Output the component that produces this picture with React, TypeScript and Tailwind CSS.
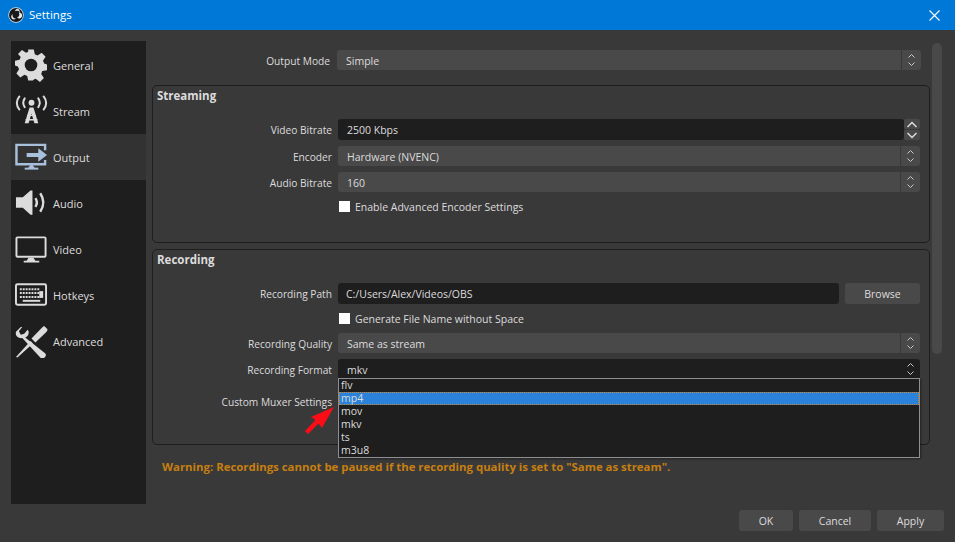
import React from 'react';

const GearIcon = () => (
  <svg width="33" height="33" viewBox="0 0 34 34" fill="#dcdcdc">
    <path fillRule="evenodd" d="M14 1h6l1 5 3 1.300 4.300-2.800 4.200 4.200L29.700 13l1.300 3 3 1v6l-5 1-1.200 3 2.900 4.300-4.200 4.200L22 32l-2 .8L19 34h-5l-1-4.800-3-1.300-4.300 2.900-4.200-4.200L4.300 22 3 19l-3-1v-5l4.800-1 1.300-3L3.200 5.700 7.400 1.500 11.700 4.400 14 3.500z" transform="translate(0 -.5) scale(.97)" />
    <circle cx="16.500" cy="16.500" r="6.500" fill="#1f1e1f" />
  </svg>
);

const StreamIcon = () => (
  <svg width="33" height="33" viewBox="0 0 34 34" fill="none" stroke="#dcdcdc" strokeLinecap="round">
    <circle cx="17" cy="8" r="3" fill="#dcdcdc" stroke="none" />
    <path d="M10 3.500c-2 3-2 6 0 9M24 3.500c2 3 2 6 0 9" strokeWidth="2" />
    <path d="M4.500 1.500c-3.500 4.500-3.500 9 0 13.500M29.500 1.500c3.500 4.500 3.500 9 0 13.500" strokeWidth="2" />
    <path d="M15 13h4l5 16h-4l-3-10-3 10h-4z" fill="#dcdcdc" stroke="none" />
    <path d="M13 21h8M11.500 25.500h11" stroke="#dcdcdc" strokeWidth="1.500" />
  </svg>
);

const OutputIcon = () => (
  <svg width="33" height="28" viewBox="0 0 34 28" fill="none">
    <path d="M31 7V1.500H1.500V21.500H31V17" stroke="#a8c0dc" strokeWidth="2.500" />
    <path d="M13 26l3-4h2l3 4z" fill="#a8c0dc" />
    <rect x="10" y="25" width="14" height="2" fill="#a8c0dc" />
    <path d="M12 10h12V5l9 7-9 7v-5H12z" fill="#a8c0dc" />
  </svg>
);

const AudioIcon = () => (
  <svg width="33" height="26" viewBox="0 0 34 26" fill="none">
    <path d="M1 7h7l8-7h2v25h-2L8 18H1z" fill="#dcdcdc" />
    <path d="M21 8c2 3 2 6 0 9" stroke="#dcdcdc" strokeWidth="2.500" />
    <path d="M26 3c4 6 4 13 0 19" stroke="#dcdcdc" strokeWidth="2.500" />
  </svg>
);

const VideoIcon = () => (
  <svg width="33" height="27" viewBox="0 0 34 27" fill="none">
    <rect x="1" y="1" width="30" height="20" rx="1" stroke="#dcdcdc" strokeWidth="2" transform="translate(.5 0)" />
    <path d="M14 22h5l2 3h4v2H9v-2h3z" fill="#dcdcdc" />
  </svg>
);

const KeyboardIcon = () => (
  <svg width="33" height="24" viewBox="0 0 34 24" fill="none">
    <rect x="1" y="1" width="31" height="21" rx="1.500" stroke="#dcdcdc" strokeWidth="2" />
    <path d="M5 6h20M5 10h20M5 14h20" stroke="#dcdcdc" strokeWidth="2" strokeDasharray="2 1" />
    <path d="M8 18h18" stroke="#dcdcdc" strokeWidth="2" />
    <rect x="25" y="8" width="4" height="7" fill="#dcdcdc" />
  </svg>
);

const ToolsIcon = () => (
  <svg width="33" height="33" viewBox="0 0 34 34" fill="#dcdcdc">
    <path d="M30 1l3.500 3.500c0 1.500-1 2.500-2 3.500L21 18l-4-4L27 3.500c1-1 2-2 3-2.500z" />
    <path d="M16 16.500l2.500 2.500L2.500 33.500 1 33z" />
    <path d="M1 7l5-5 1.500 0-3.500 4.500 2 3.500 3.500-1 3.500-4 1 1.500c.5 3-1 5.500-3.500 6.500L31 29c1.500 1.500 1 3-.5 4.500s-3 1.500-4.500 0L7.500 13.500C3 14 0 11 1 7z" />
  </svg>
);

const ObsLogo = () => (
  <svg width="16" height="16" viewBox="0 0 16 16">
    <circle cx="8" cy="8" r="7.700" fill="#e8e8e8" />
    <circle cx="8" cy="8" r="7" fill="#17181a" />
    <path d="M9 1.800a3 3 0 0 1 2.800 3.700A3.200 3.200 0 0 0 7 4.300a3 3 0 0 1 2-2.500zM13.800 10a3 3 0 0 1-4.700.6 3.200 3.200 0 0 0 1.600-5 3 3 0 0 1 3.100 4.400zM4 11.800a3 3 0 0 1 .7-4.700 3.200 3.200 0 0 0 3.300 4.400 3 3 0 0 1-4 .3z" fill="#e8e8e8" />
  </svg>
);

const SpinIcon = () => (
  <svg width="9" height="14" viewBox="0 0 9 14" fill="none" stroke="#c8c8c8" strokeWidth="1">
    <path d="M1.500 4.500L4.500 1.500l3 3M1.500 9.500l3 3 3-3" />
  </svg>
);

const navItems = [
  { label: 'General', icon: <GearIcon /> },
  { label: 'Stream', icon: <StreamIcon /> },
  { label: 'Output', icon: <OutputIcon />, active: true },
  { label: 'Audio', icon: <AudioIcon /> },
  { label: 'Video', icon: <VideoIcon /> },
  { label: 'Hotkeys', icon: <KeyboardIcon /> },
  { label: 'Advanced', icon: <ToolsIcon /> },
];

const formats = ['flv', 'mp4', 'mov', 'mkv', 'ts', 'm3u8'];

function Combo({ value, dark }: { value: string; dark?: boolean }) {
  return (
    <div className={`flex h-5 flex-1 items-center rounded-[3px] ${dark ? 'bg-[#1f1e1f]' : 'bg-[#4a494a]'}`}>
      <span className="mt-[2px] flex-1 pl-[9px]">{value}</span>
      <span className={`flex h-full w-5 items-center justify-center border-l ${dark ? 'border-transparent' : 'border-[#3a393a]'}`}>
        <SpinIcon />
      </span>
    </div>
  );
}

function Field({ label, children, className = '' }: { label?: string; children: React.ReactNode; className?: string }) {
  return (
    <div className={`flex items-center pr-[9px] ${className}`}>
      <span className="mt-[2px] w-[179px] text-right text-[10.200px]">{label}</span>
      <div className="ml-[6px] flex flex-1 items-center">{children}</div>
    </div>
  );
}

function CheckRow({ label, className = '' }: { label: string; className?: string }) {
  return (
    <Field className={`h-[15px] ${className}`}>
      <span className="ml-px h-[11px] w-[11px] bg-white" />
      <span className="ml-[5px] mt-[2px]">{label}</span>
    </Field>
  );
}

function GroupBox({ title, className = '', children }: { title: string; className?: string; children: React.ReactNode }) {
  return (
    <section className={`rounded-[5px] border border-[#1f1e1f] ${className}`}>
      <h2 className="pl-1 pt-[2px] text-[11.500px] font-bold leading-[15px]">{title}</h2>
      {children}
    </section>
  );
}

export default function App() {
  return (
    <div className="flex h-[542px] w-[955px] flex-col overflow-hidden bg-[#3a393a] font-['Open_Sans',sans-serif] text-[10.500px] leading-[15px] text-[#dcdcdc]">
      <header className="flex h-[30px] shrink-0 items-center bg-[#0078d7] pl-2 pr-[15px] text-white">
        <ObsLogo />
        <span className="mb-[2px] ml-[5px] flex-1 text-[11.500px]">Settings</span>
        <svg width="11" height="11" viewBox="0 0 11 11" stroke="#fff" strokeWidth="1.100">
          <path d="M.5.500l10 10M10.500.500l-10 10" />
        </svg>
      </header>

      <div className="flex flex-1 flex-col px-[11px] pt-[11px]">
        <div className="flex h-[463px]">
          <nav className="flex w-[135px] flex-col bg-[#1f1e1f] pt-px">
            {navItems.map((item) => (
              <div
                key={item.label}
                className={`flex h-[46px] items-center pl-1 ${item.active ? 'bg-[#333233]' : ''}`}
              >
                <span className="flex w-[38px] items-center justify-start">{item.icon}</span>
                <span className="text-[11px]">{item.label}</span>
              </div>
            ))}
          </nav>

          <main className="ml-[6px] flex w-[778px] flex-col pt-[9px]">
            <div className="flex items-center pr-[9px]">
              <span className="mt-[2px] w-[178px] text-right text-[10.200px]">Output Mode</span>
              <div className="ml-[7px] flex flex-1">
                <Combo value="Simple" />
              </div>
            </div>

            <GroupBox title="Streaming" className="mt-[15px] h-[158px]">
              <Field label="Video Bitrate" className="mt-4">
                <div className="flex h-[21px] flex-1 items-center rounded-[3px] bg-[#1f1e1f] pl-[9px] pt-[2px]">2500 Kbps</div>
                <div className="flex h-[21px] w-4 flex-col gap-px">
                  {[0, 1].map((i) => (
                    <span key={i} className="flex flex-1 items-center justify-center rounded-[2px] bg-[#4a494a]">
                      <svg width="12" height="7" viewBox="0 0 12 7" fill="none" stroke="#dcdcdc" strokeWidth="1.500">
                        <path d={i === 0 ? 'M1.500 6L6 1.500 10.500 6' : 'M1.500 1L6 5.500 10.500 1'} />
                      </svg>
                    </span>
                  ))}
                </div>
              </Field>
              <Field label="Encoder" className="mt-[6px]">
                <Combo value="Hardware (NVENC)" />
              </Field>
              <Field label="Audio Bitrate" className="mt-[6px]">
                <Combo value="160" />
              </Field>
              <CheckRow label="Enable Advanced Encoder Settings" className="mt-[7px]" />
            </GroupBox>

            <GroupBox title="Recording" className="mt-[6px] h-[196px]">
              <Field label="Recording Path" className="mt-4">
                <div className="flex h-[21px] flex-1 items-center rounded-[3px] bg-[#1f1e1f] pl-2 pt-[2px]">C:/Users/Alex/Videos/OBS</div>
                <button className="ml-[6px] h-[21px] w-[75px] rounded-[3px] bg-[#4a494a] pt-[2px]">Browse</button>
              </Field>
              <CheckRow label="Generate File Name without Space" className="mt-[7px]" />
              <Field label="Recording Quality" className="mt-[7px]">
                <Combo value="Same as stream" />
              </Field>
              <Field label="Recording Format" className="relative mt-[6px]">
                <Combo value="mkv" dark />
                <ul className="absolute left-[185px] top-[19px] z-10 h-[80px] w-[582px] border border-[#8e8f90] bg-[#1f1e1f] leading-[13px] shadow-[1px_1px_2px_#0006]">
                  {formats.map((format) => (
                    <li
                      key={format}
                      className={`h-[13px] pl-[2px] ${format === 'mp4' ? 'border border-dotted border-[#d9821a] bg-[#2a82da] pl-px leading-[11px]' : ''}`}
                    >
                      {format}
                    </li>
                  ))}
                </ul>
                <svg className="absolute left-[152px] top-[48px] z-20" width="30" height="28" viewBox="0 0 30 28">
                  <path d="M29 0L17 21l-3.500-4.500L3 27 0 24 10.500 13 6 10z" fill="#fa0d17" />
                </svg>
              </Field>
              <Field label="Custom Muxer Settings" className="mt-3">
                <div className="h-5 flex-1 rounded-[3px] bg-[#1f1e1f]" />
              </Field>
            </GroupBox>

            <p className="ml-[10px] mt-[14px] text-[11.400px] font-bold text-[#c67f10]">
              Warning: Recordings cannot be paused if the recording quality is set to "Same as stream".
            </p>
          </main>

          <div className="ml-[2px] mt-[2px] h-[311px] w-[10px] rounded-[5px] bg-[#4a494a]" />
        </div>

        <footer className="flex justify-end gap-[6px] pr-0 pt-[6px]">
          <button className="h-[21px] w-[54px] rounded-[3px] bg-[#4a494a] pt-[2px]">OK</button>
          <button className="h-[21px] w-[72px] rounded-[3px] bg-[#4a494a] pt-[2px]">Cancel</button>
          <button className="h-[21px] w-[67px] rounded-[3px] bg-[#4a494a] pt-[2px]">Apply</button>
        </footer>
      </div>
    </div>
  );
}
